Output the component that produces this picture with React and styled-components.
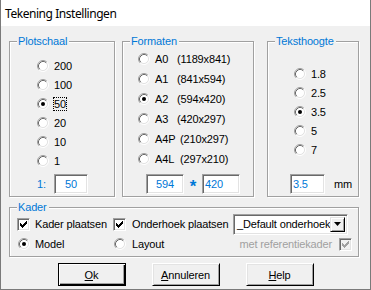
import React from 'react';
import styled, { createGlobalStyle } from 'styled-components';

const GlobalStyle = createGlobalStyle`
  html, body {
    margin: 0;
    padding: 0;
    background: #f0f0f0;
  }
  body {
    font-family: "Liberation Sans", Arial, sans-serif;
    font-size: 11px;
    letter-spacing: -0.15px;
    color: #000;
  }
`;

const BLUE = '#0078d7';

const Window = styled.div`
  width: 371px;
  height: 290px;
  box-sizing: border-box;
  border: 1px solid #7a7a7a;
  border-top: none;
  background: #f0f0f0;
  display: flex;
  flex-direction: column;
  overflow: hidden;
`;

const TitleBar = styled.div`
  height: 26px;
  flex: none;
  background: #fff;
  display: flex;
  align-items: center;
  padding-left: 4px;
  font-family: "Noto Sans", "Liberation Sans", sans-serif;
  font-size: 12px;
  letter-spacing: -0.45px;
`;

const Body = styled.div`
  padding: 15px 0 0 8px;
  display: flex;
  flex-direction: column;
`;

const TopRow = styled.div`
  display: flex;
`;

const Group = styled.div`
  position: relative;
  box-sizing: border-box;
  width: ${(p) => p.$w}px;
  height: ${(p) => p.$h}px;
  margin-left: ${(p) => p.$ml || 0}px;
  margin-top: ${(p) => p.$mt || 0}px;
  padding: ${(p) => p.$pt || 0}px 0 0 ${(p) => p.$pl || 0}px;
  border: 1px solid #a0a0a0;
  box-shadow: inset 1px 1px #fff, 1px 1px #fff;
  display: flex;
  flex-direction: column;
`;

const Legend = styled.span`
  position: absolute;
  top: -7px;
  left: 7px;
  padding: 0 2px 0 1px;
  line-height: 13px;
  background: #f0f0f0;
  color: ${BLUE};
`;

const OptionRow = styled.div`
  height: ${(p) => p.$h}px;
  display: flex;
  align-items: center;
  flex: none;
`;

const OptionLabel = styled.span`
  margin-left: ${(p) => (p.$focus ? 4 : 5)}px;
  line-height: 12px;
  border: ${(p) => (p.$focus ? '1px dotted #000' : 'none')};
  white-space: pre;
`;

const SizeName = styled.span`
  display: inline-block;
  min-width: 22px;
  padding-right: ${(p) => (p.$long ? 3 : 0)}px;
`;

const BottomRow = styled.div`
  margin-top: auto;
  margin-bottom: 2px;
  margin-left: ${(p) => p.$indent || 0}px;
  display: flex;
  align-items: center;
  height: 20px;
`;

const Field = styled.div`
  box-sizing: border-box;
  width: ${(p) => p.$w}px;
  height: 20px;
  background: #fff;
  border: 1px solid;
  border-color: #a0a0a0 #fff #fff #a0a0a0;
  box-shadow: inset 1px 1px #696969, inset -1px -1px #e3e3e3;
  color: ${BLUE};
  display: flex;
  align-items: center;
  justify-content: ${(p) => (p.$center ? 'center' : 'flex-start')};
  padding: 0 2px;
`;

const BlueText = styled.span`
  color: ${BLUE};
  width: ${(p) => p.$w || 'auto'};
`;

const Star = styled.span`
  color: ${BLUE};
  font-size: 17px;
  font-weight: bold;
  width: 18px;
  text-align: center;
  margin-top: 5px;
`;

const Unit = styled.span`
  margin-left: 9px;
`;

const KaderGrid = styled.div`
  display: grid;
  grid-template-columns: 96px 120px 119px;
  grid-auto-rows: 20px;
  align-items: center;
`;

const Cell = styled.div`
  display: flex;
  align-items: center;
  justify-content: ${(p) => (p.$right ? 'flex-end' : 'flex-start')};
  color: ${(p) => (p.$disabled ? '#a0a0a0' : '#000')};
`;

const RadioSlot = styled.span`
  display: flex;
  margin-left: 1px;
`;

const CellText = styled.span`
  margin-left: ${(p) => p.$ml ?? 5}px;
  margin-right: ${(p) => p.$mr || 0}px;
  white-space: nowrap;
`;

const Box = styled.span`
  box-sizing: border-box;
  width: 13px;
  height: 13px;
  flex: none;
  border: 1px solid;
  border-color: #a0a0a0 #fff #fff #a0a0a0;
  box-shadow: inset 1px 1px #696969, inset -1px -1px #e3e3e3;
  background: ${(p) => (p.$disabled ? '#f0f0f0' : '#fff')};
  display: flex;
  align-items: center;
  justify-content: center;
`;

const Combo = styled.div`
  box-sizing: border-box;
  width: 115px;
  height: 21px;
  background: #fff;
  border: 1px solid;
  border-color: #a0a0a0 #fff #fff #a0a0a0;
  box-shadow: inset 1px 1px #696969, inset -1px -1px #e3e3e3;
  display: flex;
  align-items: stretch;
  padding: 2px;
`;

const ComboText = styled.span`
  flex: 1;
  display: flex;
  align-items: center;
  padding-left: 1px;
  white-space: nowrap;
`;

const ComboButton = styled.span`
  box-sizing: border-box;
  width: 15px;
  background: #f0f0f0;
  border: 1px solid;
  border-color: #e3e3e3 #000 #000 #e3e3e3;
  box-shadow: inset 1px 1px #fff, inset -1px -1px #a0a0a0;
  display: flex;
  align-items: center;
  justify-content: center;
`;

const ButtonRow = styled.div`
  display: flex;
  justify-content: center;
  gap: 26px;
  margin-top: 6px;
  margin-left: -8px;
`;

const Button = styled.div`
  box-sizing: border-box;
  width: 68px;
  height: 23px;
  background: #f0f0f0;
  border: 1px solid;
  border-color: ${(p) => (p.$default ? '#000' : '#fff #000 #000 #fff')};
  box-shadow: ${(p) =>
    p.$default
      ? 'inset 1px 1px #fff, inset -1px -1px #000, inset -2px -2px #a0a0a0'
      : 'inset 1px 1px #e3e3e3, inset -1px -1px #a0a0a0'};
  display: flex;
  align-items: center;
  justify-content: center;
`;

function Radio({ checked }) {
  return (
    <svg width="12" height="12" viewBox="0 0 12 12" style={{ flex: 'none' }}>
      <circle cx="6" cy="6" r="4.5" fill="#fff" />
      <path d="M2.11 9.89 A5.5 5.5 0 0 1 9.89 2.11" stroke="#a0a0a0" fill="none" />
      <path d="M9.89 2.11 A5.5 5.5 0 0 1 2.11 9.89" stroke="#fff" fill="none" />
      <path d="M2.82 9.18 A4.5 4.5 0 0 1 9.18 2.82" stroke="#696969" fill="none" />
      <path d="M9.18 2.82 A4.5 4.5 0 0 1 2.82 9.18" stroke="#e3e3e3" fill="none" />
      {checked && <circle cx="6" cy="6" r="2" fill="#000" />}
    </svg>
  );
}

const CHECK = ['......#', '.....##', '#...###', '##.###.', '#####..', '.###...', '..#....'];

function Check({ color }) {
  return (
    <svg width="7" height="7" viewBox="0 0 7 7" shapeRendering="crispEdges">
      {CHECK.flatMap((row, y) =>
        row.split('').map((c, x) =>
          c === '#' ? <rect key={`${x}-${y}`} x={x} y={y} width="1" height="1" fill={color} /> : null
        )
      )}
    </svg>
  );
}

function Checkbox({ disabled }) {
  return (
    <Box $disabled={disabled}>
      <Check color={disabled ? '#a0a0a0' : '#000'} />
    </Box>
  );
}

const scales = ['200', '100', '50', '20', '10', '1'];
const formats = [
  ['A0', '(1189x841)'],
  ['A1', '(841x594)'],
  ['A2', '(594x420)'],
  ['A3', '(420x297)'],
  ['A4P', '(210x297)'],
  ['A4L', '(297x210)'],
];
const heights = ['1.8', '2.5', '3.5', '5', '7'];

export default function App() {
  return (
    <>
      <GlobalStyle />
      <Window>
        <TitleBar>Tekening Instellingen</TitleBar>
        <Body>
          <TopRow>
            <Group $w={106} $h={156} $pt={14} $pl={27}>
              <Legend>Plotschaal</Legend>
              {scales.map((s) => (
                <OptionRow key={s} $h={19}>
                  <Radio checked={s === '50'} />
                  <OptionLabel $focus={s === '50'}>{s}</OptionLabel>
                </OptionRow>
              ))}
              <BottomRow>
                <BlueText $w="17px">1:</BlueText>
                <Field $w={34} $center>50</Field>
              </BottomRow>
            </Group>

            <Group $w={132} $h={156} $ml={7} $pt={7} $pl={15}>
              <Legend>Formaten</Legend>
              {formats.map(([name, dim]) => (
                <OptionRow key={name} $h={20}>
                  <Radio checked={name === 'A2'} />
                  <OptionLabel>
                    <SizeName $long={name.length > 2}>{name}</SizeName>
                    {dim}
                  </OptionLabel>
                </OptionRow>
              ))}
              <BottomRow $indent={8}>
                <Field $w={38} $center>594</Field>
                <Star>*</Star>
                <Field $w={38}>420</Field>
              </BottomRow>
            </Group>

            <Group $w={92} $h={156} $ml={13} $pt={22} $pl={26}>
              <Legend>Teksthoogte</Legend>
              {heights.map((h) => (
                <OptionRow key={h} $h={19}>
                  <Radio checked={h === '3.5'} />
                  <OptionLabel>{h}</OptionLabel>
                </OptionRow>
              ))}
              <BottomRow $indent={-4}>
                <Field $w={35}>3.5</Field>
                <Unit>mm</Unit>
              </BottomRow>
            </Group>
          </TopRow>

          <Group $w={350} $h={50} $mt={10} $pt={6} $pl={7}>
            <Legend>Kader</Legend>
            <KaderGrid>
              <Cell>
                <Checkbox />
                <CellText>Kader plaatsen</CellText>
              </Cell>
              <Cell>
                <Checkbox />
                <CellText $ml={6}>Onderhoek plaatsen</CellText>
              </Cell>
              <Cell>
                <Combo>
                  <ComboText>_Default onderhoek</ComboText>
                  <ComboButton>
                    <svg width="7" height="4" viewBox="0 0 7 4">
                      <polygon points="0,0 7,0 3.5,4" fill="#000" />
                    </svg>
                  </ComboButton>
                </Combo>
              </Cell>
              <Cell>
                <RadioSlot>
                  <Radio checked />
                </RadioSlot>
                <CellText>Model</CellText>
              </Cell>
              <Cell>
                <RadioSlot>
                  <Radio />
                </RadioSlot>
                <CellText $ml={6}>Layout</CellText>
              </Cell>
              <Cell $right $disabled>
                <CellText $ml={0} $mr={7}>met referentiekader</CellText>
                <Checkbox disabled />
              </Cell>
            </KaderGrid>
          </Group>

          <ButtonRow>
            <Button $default>
              <span><u>O</u>k</span>
            </Button>
            <Button>
              <span><u>A</u>nnuleren</span>
            </Button>
            <Button>
              <span><u>H</u>elp</span>
            </Button>
          </ButtonRow>
        </Body>
      </Window>
    </>
  );
}
